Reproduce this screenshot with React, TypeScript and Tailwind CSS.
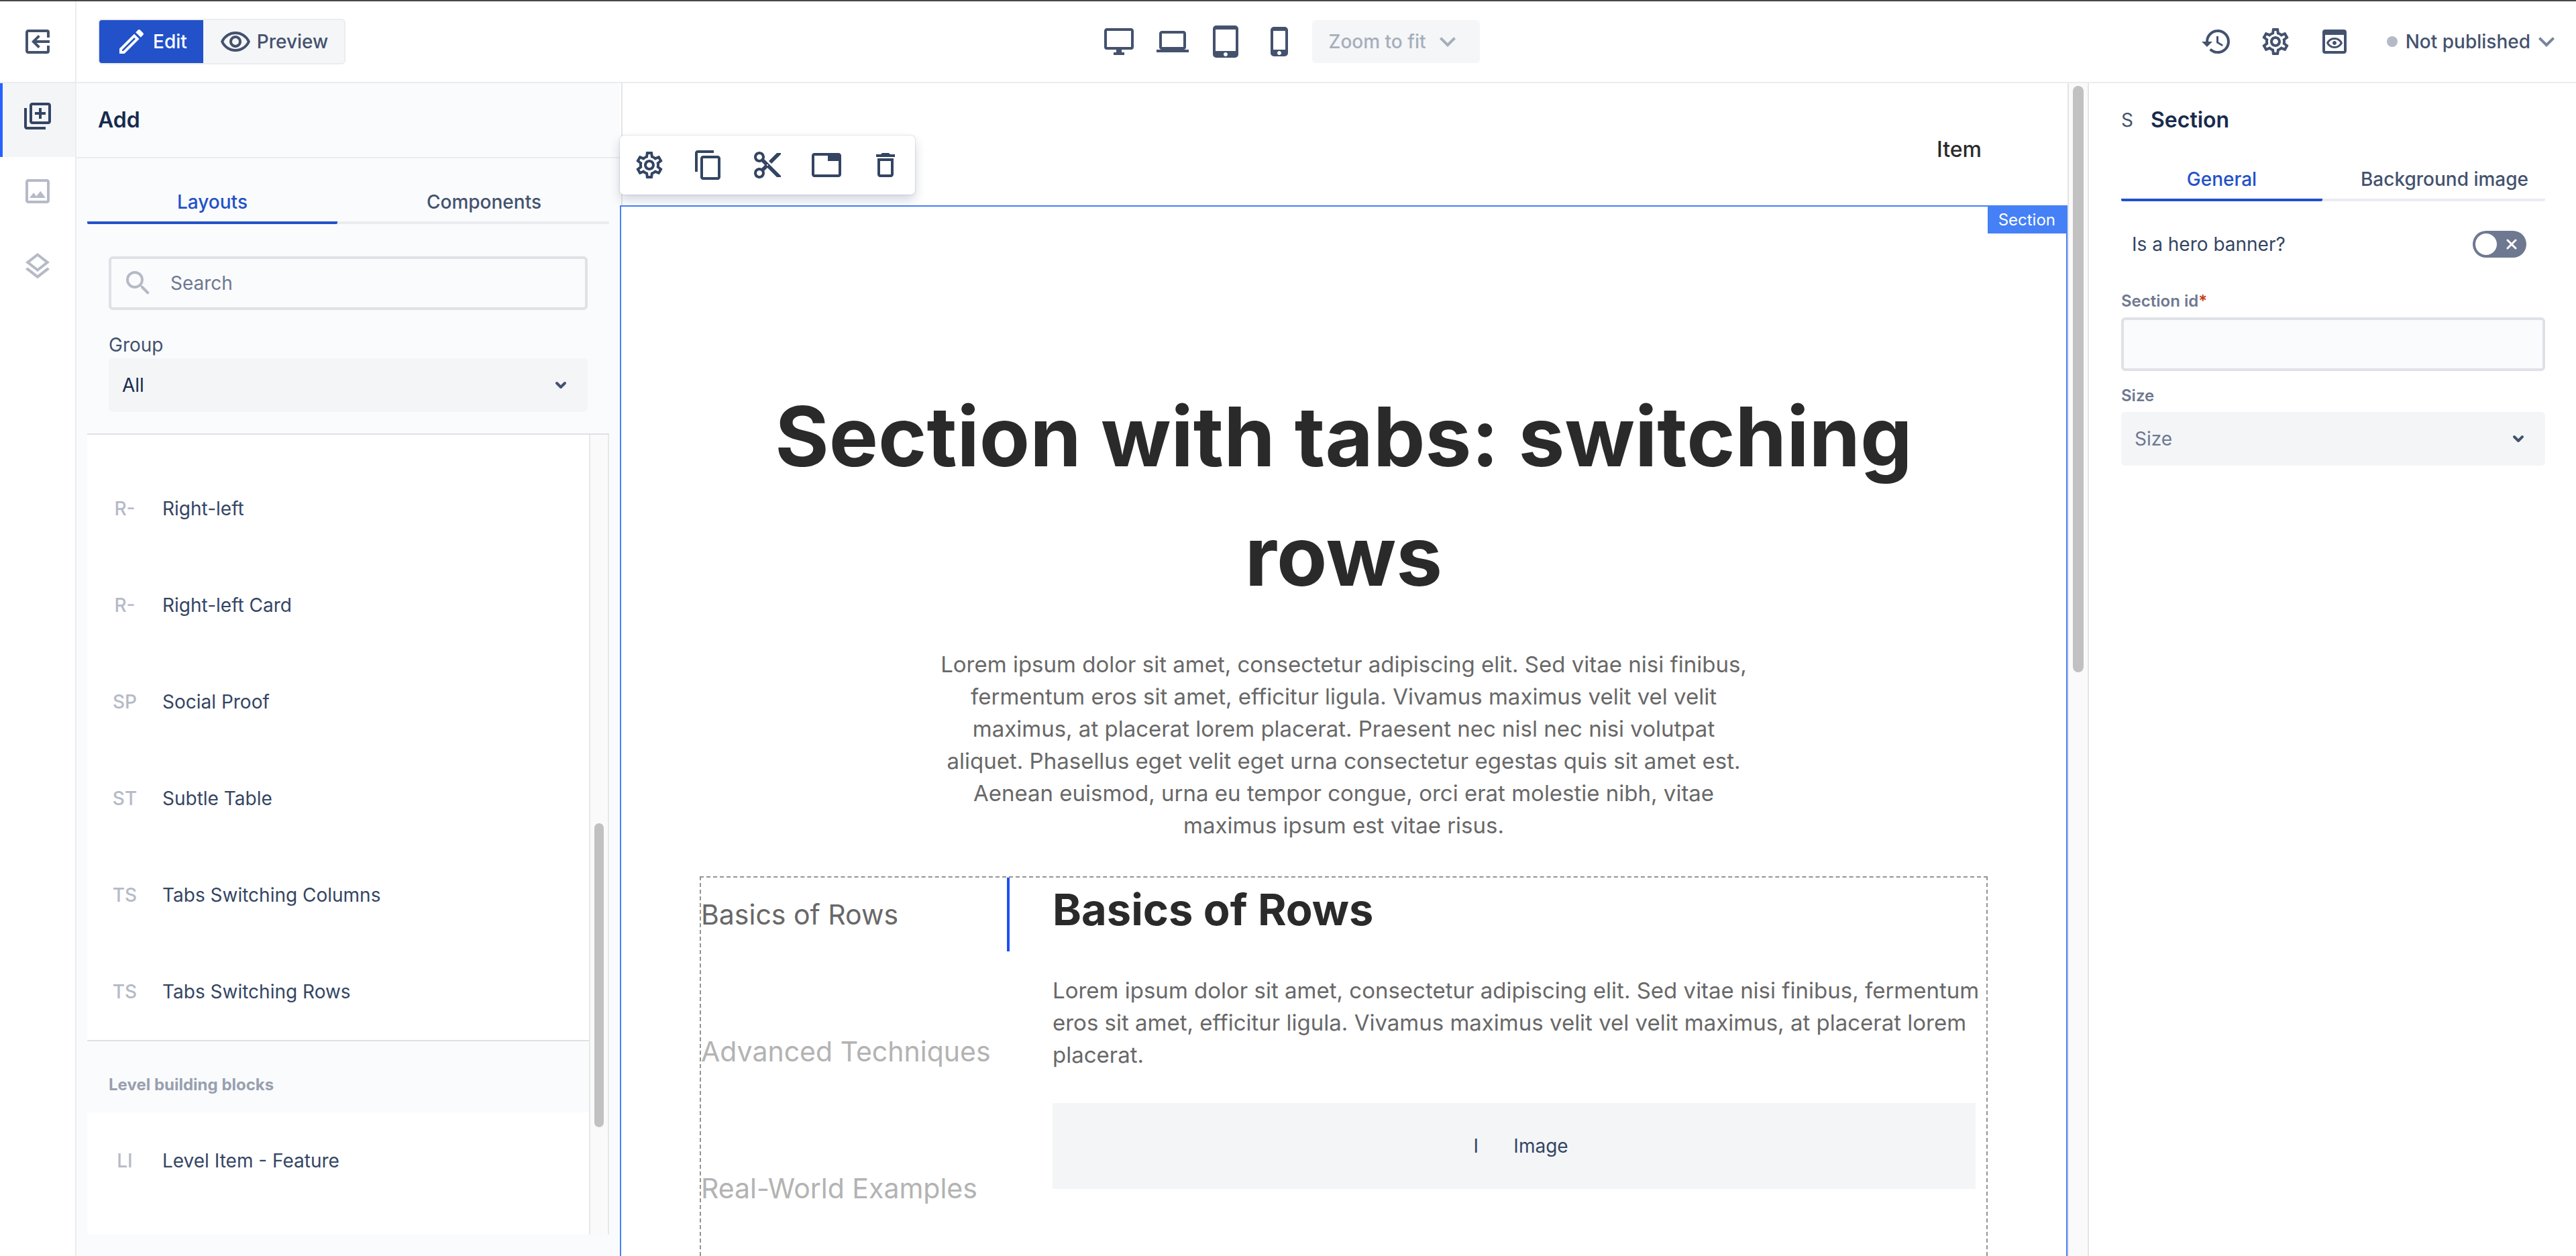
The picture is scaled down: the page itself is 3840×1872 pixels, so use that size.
import React, { useState } from "react";
import {
  MdExpandMore,
  MdExitToApp,
  MdHistory,
  MdOutlineContentCopy,
  MdContentCut,
  MdDeleteOutline,
  MdOutlineEdit,
  MdOutlineImage,
  MdOutlineLayers,
  MdOutlineLibraryAdd,
  MdOutlinePreview,
  MdOutlineRemoveRedEye,
  MdOutlineSettings,
  MdOutlineTab,
  MdPhoneIphone,
  MdSearch,
  MdTabletMac,
} from "react-icons/md";

const layouts = [
  { code: "R-", name: "Right-left" },
  { code: "R-", name: "Right-left Card" },
  { code: "SP", name: "Social Proof" },
  { code: "ST", name: "Subtle Table" },
  { code: "TS", name: "Tabs Switching Columns" },
  { code: "TS", name: "Tabs Switching Rows" },
];

const rowTabs = ["Basics of Rows", "Advanced Techniques", "Real-World Examples"];

function MonitorIcon() {
  return (
    <svg viewBox="0 0 24 24" className="size-12" fill="currentColor" aria-hidden="true">
      <path d="M21 16H3V4h18m0-2H3c-1.11 0-2 .89-2 2v12a2 2 0 0 0 2 2h7v2H8v2h8v-2h-2v-2h7a2 2 0 0 0 2-2V4c0-1.11-.9-2-2-2z" />
    </svg>
  );
}

function LaptopIcon() {
  return (
    <svg viewBox="0 0 24 24" className="size-12" fill="currentColor" aria-hidden="true">
      <path d="M4 6h16v10H4m16 2a2 2 0 0 0 2-2V6c0-1.11-.9-2-2-2H4c-1.11 0-2 .89-2 2v10a2 2 0 0 0 2 2H0v2h24v-2h-4z" />
    </svg>
  );
}

function Caret() {
  return (
    <svg
      viewBox="0 0 18 12"
      className="pointer-events-none absolute top-1/2 right-[31px] h-3 w-[18px] -translate-y-1/2"
      fill="none"
      stroke="#42526e"
      strokeWidth="4"
      strokeLinecap="round"
      strokeLinejoin="round"
      aria-hidden="true"
    >
      <path d="M3 3l6 6 6-6" />
    </svg>
  );
}

function IconButton({ label, children }: { label: string; children: React.ReactNode }) {
  return (
    <button type="button" aria-label={label} className="shrink-0">
      {children}
    </button>
  );
}

function Tabs({ items }: { items: string[] }) {
  const [active, setActive] = useState(0);
  return (
    <div role="tablist" className="flex gap-8 rounded-[2px] border-b-4 border-[#ebecf0]">
      {items.map((item, i) => (
        <button
          key={item}
          type="button"
          role="tab"
          aria-selected={i === active}
          onClick={() => setActive(i)}
          className={
            i === active
              ? "-mb-1 h-[62px] flex-1 rounded-[2px] border-b-4 border-[#2251c9] font-medium whitespace-nowrap text-[#2251c9]"
              : "-mb-1 h-[62px] flex-1 border-b-4 border-transparent font-medium whitespace-nowrap text-[#44526e]"
          }
        >
          {item}
        </button>
      ))}
    </div>
  );
}

function Row({ code, name }: { code: string; name: string }) {
  return (
    <li className="flex h-36 items-center gap-8 px-8">
      <span className="w-12 text-center font-medium text-[#b5bac7]">{code}</span>
      <span className="text-[#344563]">{name}</span>
    </li>
  );
}

function Header() {
  return (
    <header className="flex h-[124px] shrink-0 border-t-2 border-b-2 border-t-[#47474a] border-b-[#ebecf0] text-[#44526e]">
      <div className="flex w-[114px] shrink-0 items-center justify-center border-r-2 border-[#ebecf0]">
        <IconButton label="Exit">
          <MdExitToApp className="size-12 -scale-x-100" />
        </IconButton>
      </div>
      <div className="-ml-[114px] grid flex-1 grid-cols-[1fr_auto_1fr] items-center pr-5 pl-[146px]">
        <div className="flex w-max overflow-hidden rounded-md border-2 border-[#ebecf0] bg-[#f5f6f8] font-medium">
          <button type="button" className="flex h-16 items-center gap-2 bg-[#2251c9] px-6 text-white">
            <MdOutlineEdit className="size-12" />
            Edit
          </button>
          <button type="button" className="flex h-16 items-center gap-2 px-6">
            <MdOutlineRemoveRedEye className="size-12" />
            Preview
          </button>
        </div>
        <div className="-ml-[116px] flex items-center gap-8">
          <IconButton label="Desktop">
            <MonitorIcon />
          </IconButton>
          <IconButton label="Laptop">
            <LaptopIcon />
          </IconButton>
          <IconButton label="Tablet">
            <MdTabletMac className="size-12" />
          </IconButton>
          <IconButton label="Phone">
            <MdPhoneIphone className="size-12" />
          </IconButton>
          <button
            type="button"
            className="-ml-2 flex h-16 items-center gap-2 rounded-md bg-[#f5f6f8] px-6 font-medium whitespace-nowrap text-[#a6aebc]"
          >
            Zoom to fit
            <MdExpandMore className="size-12" />
          </button>
        </div>
        <div className="flex items-center justify-end gap-10">
          <IconButton label="History">
            <MdHistory className="size-12" />
          </IconButton>
          <IconButton label="Settings">
            <MdOutlineSettings className="size-12" />
          </IconButton>
          <IconButton label="Preview page">
            <MdOutlinePreview className="size-12" />
          </IconButton>
          <button type="button" className="ml-3.5 flex items-center font-medium whitespace-nowrap">
            <span className="mr-3 size-4 rounded-full bg-[#b5bac7]" />
            Not published
            <MdExpandMore className="size-12 text-[#7a8499]" />
          </button>
        </div>
      </div>
    </header>
  );
}

function Rail() {
  return (
    <nav className="flex w-[114px] shrink-0 flex-col gap-0.5 border-r-2 border-[#ebecf0] text-[#b5bac7]">
      <button
        type="button"
        aria-label="Add"
        className="flex h-[110px] items-center justify-center border-l-4 border-[#2962ff] bg-[#f4f5f7] pr-1 pb-3 text-[#344563]"
      >
        <MdOutlineLibraryAdd className="size-12" />
      </button>
      <button type="button" aria-label="Assets" className="flex h-[110px] items-center justify-center pb-3">
        <MdOutlineImage className="size-12" />
      </button>
      <button type="button" aria-label="Layers" className="flex h-[110px] items-center justify-center pb-3">
        <MdOutlineLayers className="size-12" />
      </button>
    </nav>
  );
}

function AddPanel() {
  return (
    <aside className="flex w-[810px] shrink-0 flex-col bg-[#fafbfd]">
      <h2 className="flex h-28 shrink-0 items-center border-b-2 border-[#ebecf0] px-8 text-[32px] font-semibold text-[#172b4d]">
        Add
      </h2>
      <div className="flex min-h-0 flex-1 flex-col px-4 pt-9 pb-8">
        <Tabs items={["Layouts", "Components"]} />
        <div className="px-8 pt-12 pb-8">
          <div className="relative">
            <MdSearch className="pointer-events-none absolute top-4 left-5 size-12 text-[#b5bac7]" />
            <input
              type="search"
              aria-label="Search"
              placeholder="Search"
              className="h-20 w-full rounded-md border-4 border-[#dfe1e6] bg-[#fafbfd] pl-22 placeholder:text-[#6e7891]"
            />
          </div>
          <label htmlFor="group" className="mt-8 block leading-10 text-[#44526e]">
            Group
          </label>
          <div className="relative">
            <select
              id="group"
              className="h-20 w-full appearance-none rounded-md bg-[#f4f5f7] px-5 text-[#172b4d]"
            >
              <option>All</option>
            </select>
            <Caret />
          </div>
        </div>
        <div className="flex min-h-0 flex-1 border-t-2 border-[#dfe1e6]">
          <div className="min-w-0 flex-1 overflow-hidden bg-white">
            <ul className="pt-[38px]">
              {layouts.map((item) => (
                <Row key={item.name} code={item.code} name={item.name} />
              ))}
            </ul>
            <h3 className="flex h-27 items-center border-t-2 border-[#dfe1e6] bg-[#fafbfd] px-8 pt-6 text-2xl font-bold text-[#97a0af]">
              Level building blocks
            </h3>
            <ul>
              <Row code="LI" name="Level Item - Feature" />
            </ul>
          </div>
          <div className="w-[30px] shrink-0 border-x-2 border-[#e8e8e8] bg-[#fafafa] px-1.5 pt-[579px]">
            <div className="h-[453px] rounded-full bg-[#c1c1c1]" />
          </div>
        </div>
      </div>
    </aside>
  );
}

function Canvas() {
  return (
    <main className="relative flex min-w-0 flex-1">
      <div className="flex min-w-0 flex-1 flex-col overflow-hidden">
        <div className="ml-0.5 flex h-[182px] shrink-0 items-center justify-end border-l-2 border-[#e4e4e6] pt-4 pr-32 text-[32px] font-medium text-[#2a2a2a]">
          Item
        </div>
        <section className="relative min-h-0 flex-1 overflow-hidden border-2 border-b-0 border-[#4580f7]">
          <span className="absolute top-0 right-0 flex h-10 items-center bg-[#4580f7] px-4 text-2xl text-white">
            Section
          </span>
          <div className="mx-auto flex h-full max-w-[1920px] flex-col">
            <h1 className="mt-[254px] text-center text-[123px] leading-[178px] font-bold text-[#2a2a2a]">
              Section with tabs: switching
              <br />
              rows
            </h1>
            <p className="mt-12 text-center text-[33px] leading-[48px] text-[#686868]">
              Lorem ipsum dolor sit amet, consectetur adipiscing elit. Sed vitae nisi finibus,
              <br />
              fermentum eros sit amet, efficitur ligula. Vivamus maximus velit vel velit
              <br />
              maximus, at placerat lorem placerat. Praesent nec nisl nec nisi volutpat
              <br />
              aliquet. Phasellus eget velit eget urna consectetur egestas quis sit amet est.
              <br />
              Aenean euismod, urna eu tempor congue, orci erat molestie nibh, vitae
              <br />
              maximus ipsum est vitae risus.
            </p>
            <div className="mt-13 flex flex-1 gap-16 border-2 border-b-0 border-dashed border-[#949494] pr-4">
              <div className="flex w-[460px] shrink-0 flex-col gap-[94px] text-[41px]">
                {rowTabs.map((tab, i) => (
                  <button
                    key={tab}
                    type="button"
                    className={
                      i === 0
                        ? "h-[110px] border-r-4 border-[#1f4ef5] text-left whitespace-nowrap text-[#686868]"
                        : "h-[110px] text-left whitespace-nowrap text-[#b3b3b3]"
                    }
                  >
                    {tab}
                  </button>
                ))}
              </div>
              <div className="min-w-0 flex-1">
                <h2 className="text-[65px] leading-[96px] font-bold text-[#2a2a2a]">Basics of Rows</h2>
                <p className="mt-12 text-[33px] leading-[48px] whitespace-nowrap text-[#686868]">
                  Lorem ipsum dolor sit amet, consectetur adipiscing elit. Sed vitae nisi finibus, fermentum
                  <br />
                  eros sit amet, efficitur ligula. Vivamus maximus velit vel velit maximus, at placerat lorem
                  <br />
                  placerat.
                </p>
                <div className="mt-12 flex h-32 items-center justify-center bg-[#f4f5f7] text-[#344563]">
                  <span className="w-12 text-center">I</span>
                  <span className="ml-8">Image</span>
                </div>
              </div>
            </div>
          </div>
        </section>
      </div>
      <div className="w-8 shrink-0 border-x-2 border-[#e4e4e6] bg-[#fafafa] px-1.5 pt-1">
        <div className="h-[874px] rounded-full bg-[#c1c1c1]" />
      </div>
      <div className="absolute top-[78px] left-0 flex h-22 items-center gap-10 rounded-md bg-white px-5 text-[#344563] shadow-[0_8px_16px_rgba(9,30,66,0.18),0_0_2px_rgba(9,30,66,0.3)]">
        <IconButton label="Section settings">
          <MdOutlineSettings className="size-12" />
        </IconButton>
        <IconButton label="Copy">
          <MdOutlineContentCopy className="size-12" />
        </IconButton>
        <IconButton label="Cut">
          <MdContentCut className="size-12" />
        </IconButton>
        <IconButton label="Save as template">
          <MdOutlineTab className="size-12" />
        </IconButton>
        <IconButton label="Delete">
          <MdDeleteOutline className="size-12" />
        </IconButton>
      </div>
    </main>
  );
}

function Properties() {
  return (
    <aside className="w-[726px] shrink-0 bg-white px-12 pr-[46px]">
      <div className="flex h-[110px] items-center">
        <span className="w-11 text-[#44526e]">S</span>
        <h2 className="text-[32px] font-semibold text-[#172b4d]">Section</h2>
      </div>
      <div className="mt-1">
        <Tabs items={["General", "Background image"]} />
      </div>
      <label className="relative mt-11 flex h-10 items-center justify-between pr-7 pl-4 text-[#344563]">
        Is a hero banner?
        <input type="checkbox" role="switch" className="peer sr-only" />
        <span className="flex h-10 w-20 items-center justify-between rounded-full bg-[#6e7891] pr-3.5 pl-1 peer-checked:flex-row-reverse peer-checked:bg-[#2251c9]">
          <span className="size-8 rounded-full bg-white" />
          <svg viewBox="0 0 16 16" className="size-4" stroke="white" strokeWidth="3" strokeLinecap="round" aria-hidden="true">
            <path d="M2 2l12 12M14 2L2 14" />
          </svg>
        </span>
      </label>
      <label htmlFor="section-id" className="mt-[49px] block text-2xl leading-8 font-semibold text-[#6e7891]">
        Section id<span className="text-[#ca3d1c]">*</span>
      </label>
      <input
        id="section-id"
        type="text"
        className="mt-2 block h-20 w-full rounded-md border-4 border-[#dfe1e6] bg-[#fafbfd] px-4"
      />
      <label htmlFor="size" className="mt-[21px] block text-2xl leading-8 font-semibold text-[#6e7891]">
        Size
      </label>
      <div className="relative mt-2">
        <select id="size" className="block h-20 w-full appearance-none rounded-md bg-[#f4f5f7] px-5 text-[#6e7891]">
          <option>Size</option>
        </select>
        <Caret />
      </div>
    </aside>
  );
}

export default function App() {
  return (
    <div className="flex h-screen flex-col overflow-hidden bg-white font-['Inter',sans-serif] text-[28px] leading-10">
      <Header />
      <div className="flex min-h-0 flex-1">
        <Rail />
        <AddPanel />
        <Canvas />
        <Properties />
      </div>
    </div>
  );
}
